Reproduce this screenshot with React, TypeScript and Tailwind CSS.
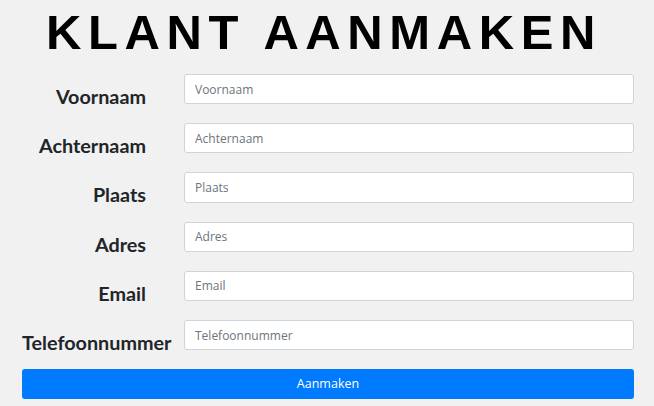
import React from "react";

const fields = ["Voornaam", "Achternaam", "Plaats", "Adres", "Email", "Telefoonnummer"];

export default function App() {
  return (
    <div className="min-h-[406px] w-full bg-[#f1f1f1] font-['Open_Sans',sans-serif] text-[#212529]">
      {/* titel */}
      <h1 className="pr-[6px] pt-[4px] text-center font-['Liberation_Sans',Arial,sans-serif] text-[49px] font-bold leading-[56px] tracking-[6.6px] text-black">
        KLANT AANMAKEN
      </h1>

      <form className="mt-[14px] flex flex-col gap-[19px] pl-[22px] pr-[20px]">
        {fields.map((f) => (
          <div key={f} className="flex h-[30.2px] items-start">
            <label className="w-[124px] shrink-0 whitespace-nowrap pt-[9px] text-right font-['Lato',sans-serif] text-[19.8px] font-bold leading-[26px]">
              {f}
            </label>
            <input
              type="text"
              placeholder={f}
              className="ml-[38px] h-[30.2px] flex-1 rounded-[3px] border border-[#ced4da] bg-white px-[10px] text-[12px] text-[#495057] placeholder:text-[#6c757d] outline-none"
            />
          </div>
        ))}
        <button
          type="button"
          className="h-[30px] w-full rounded-[3px] bg-[#007bff] text-[12.5px] text-white"
        >
          Aanmaken
        </button>
      </form>
    </div>
  );
}
